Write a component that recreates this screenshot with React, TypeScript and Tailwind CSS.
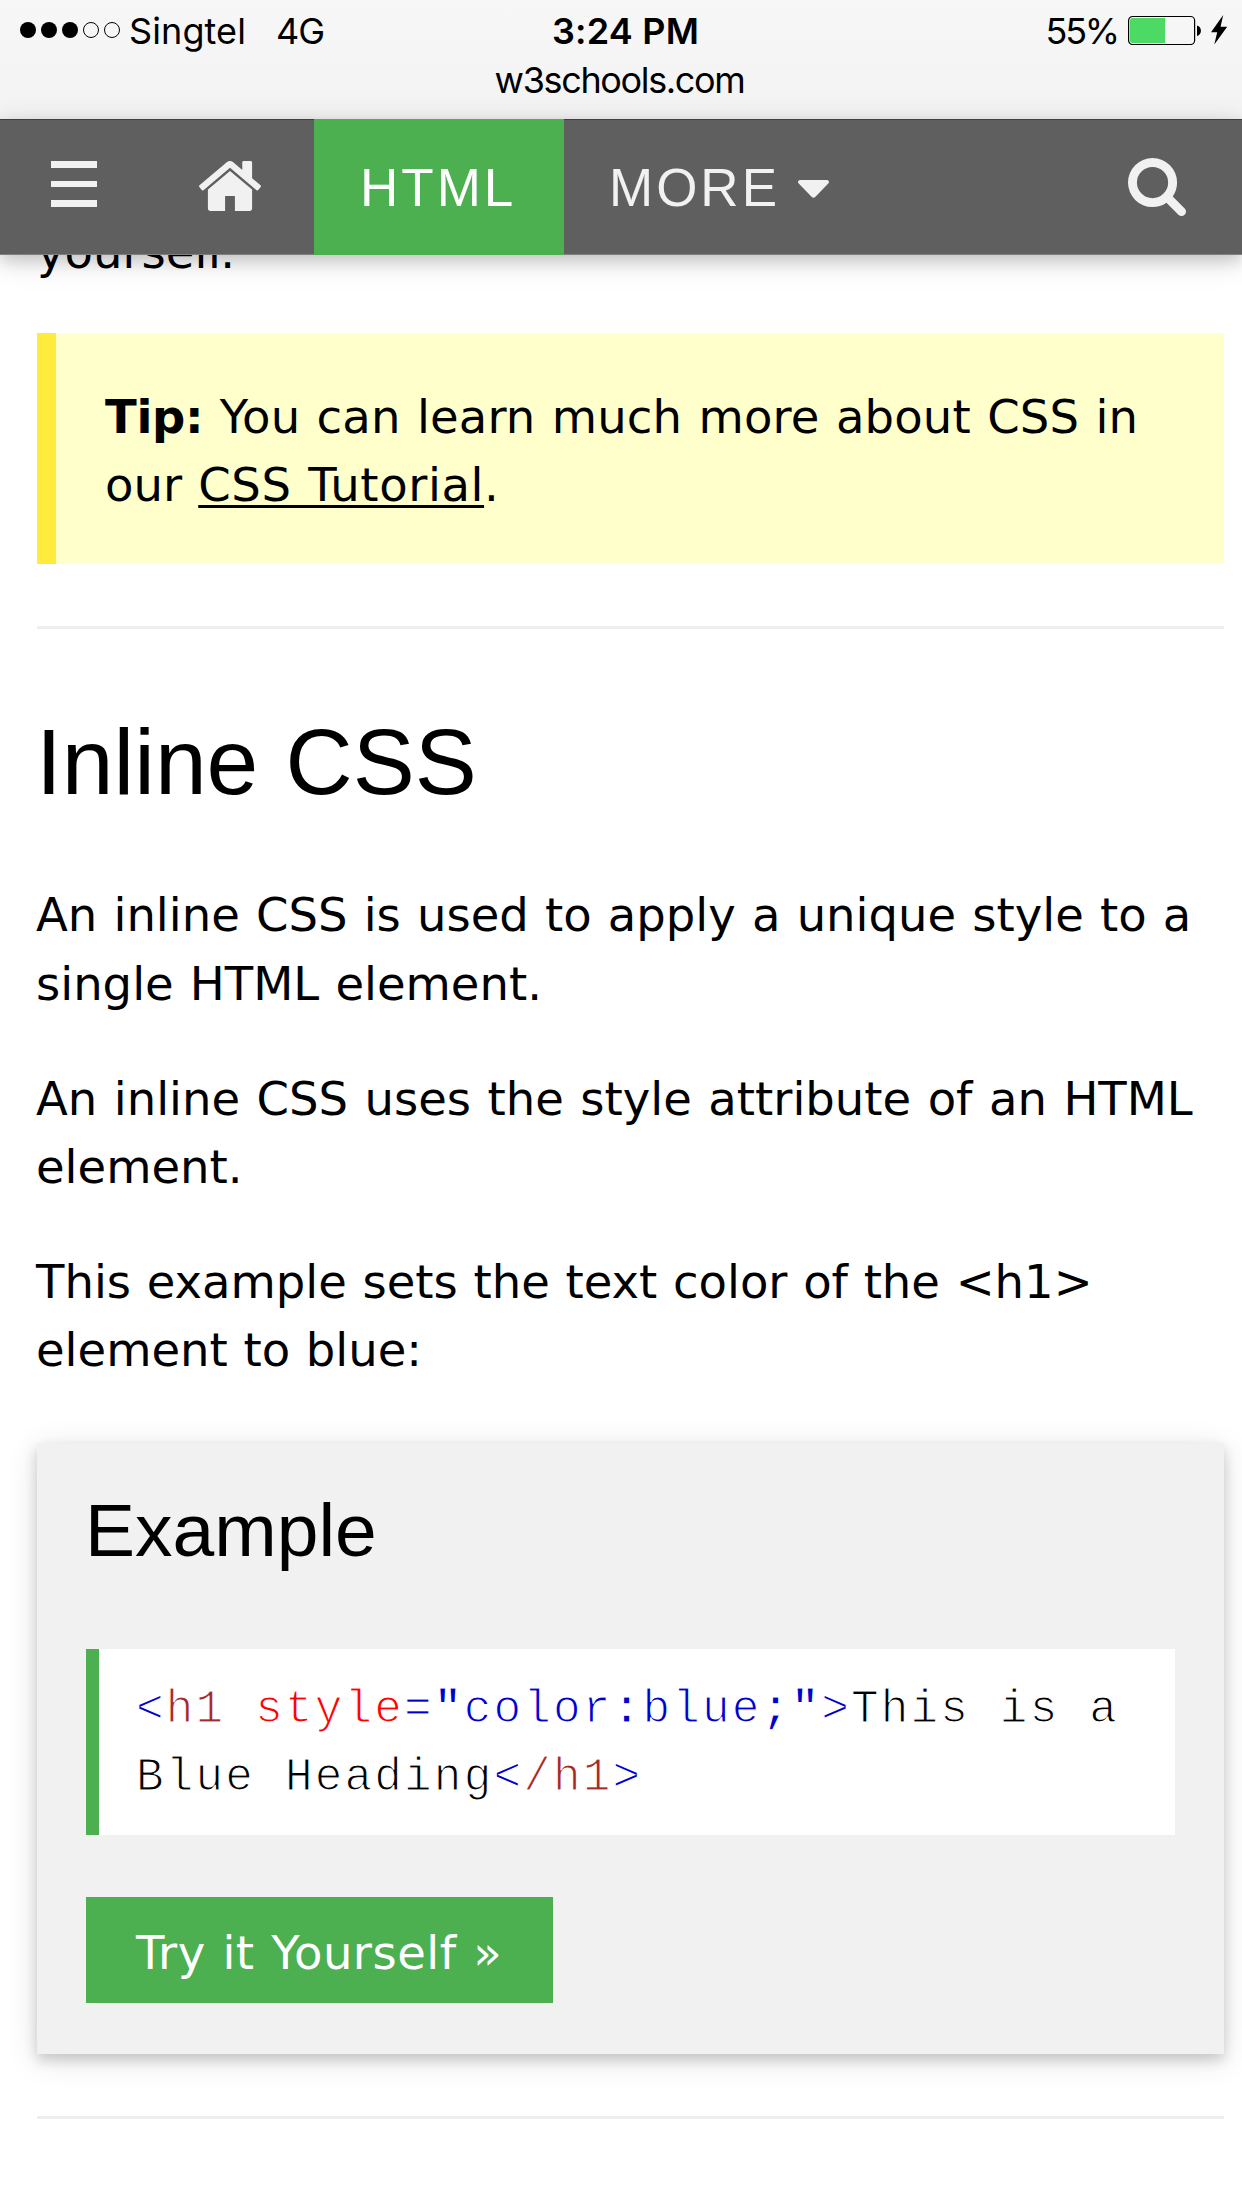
function SignalDots() {
  return (
    <div className="flex gap-[5px]">
      {[true, true, true, false, false].map((on, i) => (
        <span
          key={i}
          className={
            on
              ? "size-4 rounded-full bg-black"
              : "size-4 rounded-full border border-black"
          }
        />
      ))}
    </div>
  );
}

function Battery() {
  return (
    <svg className="h-[30px] w-[74px]" viewBox="0 0 74 30" aria-hidden="true">
      <rect x="0.6" y="1.5" width="66" height="28" rx="4" fill="none" stroke="#000" strokeWidth="1.2" />
      <path d="M4.5 3H37v25H4.500a2.500 2.500 0 0 1-2.500-2.500v-20A2.500 2.500 0 0 1 4.500 3z" fill="#4cd964" />
      <path d="M69 10.500c5.200 1 5.200 9.500 0 10.500z" fill="#000" />
    </svg>
  );
}

function Bolt() {
  return (
    <svg className="h-[30px] w-[17px]" viewBox="0 0 17 30" aria-hidden="true">
      <path d="M12.200 0 0 17.300h6.200L3.300 29.500 16.200 11.800H9.600z" fill="#000" />
    </svg>
  );
}

function StatusBar() {
  return (
    <div className="h-[119px] bg-linear-to-b from-[#f7f7f7] to-[#f3f3f3] pt-[9px] font-[Inter,sans-serif] text-[36px] leading-[44px] text-black">
      <div className="grid h-11 grid-cols-[1fr_auto_1fr]">
        <div className="flex pl-5">
          <div className="pt-[13px]">
            <SignalDots />
          </div>
          <span className="ml-[9px] tracking-[0.1px]">Singtel</span>
          <span className="ml-[30px] tracking-[-1px]">4G</span>
        </div>
        <span className="pl-[9px] font-semibold tracking-[0.2px]">3:24 PM</span>
        <div className="flex justify-end pr-[14px]">
          <span className="mr-2.5 tracking-[-2.200px]">55%</span>
          <div className="flex gap-[9px] pt-[6px]">
            <Battery />
            <Bolt />
          </div>
        </div>
      </div>
      <div className="mt-[5px] pr-[3px] text-center tracking-[-1.350px]">w3schools.com</div>
    </div>
  );
}

function NavBar() {
  return (
    <nav className="flex h-[136px] border-t border-b border-t-[#3f3f3f] border-b-[#808080] bg-[#5f5f5f] font-['Liberation_Sans',sans-serif] text-[53px] leading-[60px] tracking-[3px] text-[#f1f1f1] shadow-[0_6px_15px_rgba(0,0,0,0.160),0_6px_30px_rgba(0,0,0,0.120)]">
      <div className="w-[148px] pt-[41px] pl-[51px]">
        <div className="flex flex-col gap-[13px]">
          <span className="h-[6.500px] w-[46px] bg-[#f1f1f1]" />
          <span className="h-[6.500px] w-[46px] bg-[#f1f1f1]" />
          <span className="h-[6.500px] w-[46px] bg-[#f1f1f1]" />
        </div>
      </div>
      <div className="w-[166px] pt-[41px] pl-[51px]">
        <svg className="h-[50px] w-[62px]" viewBox="24 253 1616 1283" preserveAspectRatio="none" fill="currentColor" aria-hidden="true">
          <path d="M1408 992v480q0 26-19 45t-45 19h-384v-384h-256v384h-384q-26 0-45-19t-19-45v-480q0-1 .5-3t.5-3l575-474 575 474q1 2 1 6zm223-69l-62 74q-8 9-21 11h-3q-13 0-21-7l-692-577-692 577q-12 8-24 7-13-2-21-11l-62-74q-8-10-7-23.500t11-21.500l719-599q32-26 76-26t76 26l244 204v-195q0-14 9-23t23-9h192q14 0 23 9t9 23v408l219 182q10 8 11 21.500t-7 23.500z" />
        </svg>
      </div>
      <div className="-my-px w-[250px] bg-[#4caf50] pt-[39px] pl-[46px] text-white">HTML</div>
      <div className="flex flex-1 pt-[38px] pl-[45px]">
        <span>MORE</span>
        <svg className="mt-[22px] ml-[18px] h-[18px] w-[31px]" viewBox="0 0 31 18" fill="currentColor" aria-hidden="true">
          <path d="M2.200 0h26.600c2 0 2.900 2.100 1.500 3.600L17.200 17c-1 1-2.400 1-3.400 0L.7 3.600C-.7 2.100.2 0 2.200 0z" />
        </svg>
      </div>
      <div className="w-[114px] pt-[38px]">
        <svg className="h-[58px] w-[58px]" viewBox="0 128 1664 1664" fill="currentColor" aria-hidden="true">
          <path d="M1152 832q0-185-131.500-316.500t-316.500-131.500-316.500 131.500-131.500 316.500 131.500 316.500 316.500 131.500 316.500-131.500 131.500-316.500zm512 832q0 52-38 90t-90 38q-54 0-90-38l-343-342q-179 124-399 124-143 0-273.500-55.500t-225-150-150-225-55.500-273.500 55.500-273.500 150-225 225-150 273.500-55.500 273.500 55.500 225 150 150 225 55.500 273.500q0 220-124 399l343 343q37 37 37 90z" />
        </svg>
      </div>
    </nav>
  );
}

function ExampleCard() {
  return (
    <section className="mt-[58px] h-[611px] bg-[#f1f1f1] px-[49px] pt-[31px] shadow-[0_6px_12px_rgba(0,0,0,0.160),0_6px_30px_rgba(0,0,0,0.120)]">
      <h3 className="-ml-px font-['Liberation_Sans',sans-serif] text-[75px] leading-[112px]">Example</h3>
      <div className="mt-[63px] h-[186px] border-l-[13px] border-[#4caf50] bg-white pt-[27px] pl-[37px] font-['Liberation_Mono',monospace] text-[46px] leading-[68px] tracking-[2.180px] whitespace-nowrap [word-spacing:0px] [-webkit-text-stroke:1.200px_white]">
        <div>
          <span className="text-[#0000cd]">&lt;</span>
          <span className="text-[brown]">h1</span>
          <span className="text-[red]"> style</span>
          <span className="text-[#0000cd]">
            =<b>"</b>color<b>:</b>blue<b>;"</b>&gt;
          </span>
          <span>This is a</span>
        </div>
        <div>
          <span>Blue Heading</span>
          <span className="text-[#0000cd]">&lt;</span>
          <span className="text-[brown]">/h1</span>
          <span className="text-[#0000cd]">&gt;</span>
        </div>
      </div>
      <div className="mt-[62px] h-[106px] w-[467px] bg-[#4caf50] pt-[22px] pl-[50px] tracking-[0.500px] text-white">
        Try it Yourself »
      </div>
    </section>
  );
}

export default function App() {
  return (
    <div className="h-[2208px] w-[1242px] overflow-hidden bg-white text-black">
      <header className="relative z-10">
        <StatusBar />
        <NavBar />
      </header>
      <main className="-mt-[37px] pr-[18px] pl-[37px] font-['DejaVu_Sans',sans-serif] text-[46.500px] leading-[68.500px] whitespace-nowrap [word-spacing:1.400px]">
        <p className="h-[68px]">yourself.</p>
        <div className="mt-[47px] h-[231px] border-l-[19px] border-[#ffeb3b] bg-[#ffffcc] pt-[50px] pl-[49px]">
          <p className="leading-[68px]">
            <b className="tracking-[-0.300px]">Tip:</b>
            <span className="tracking-[0.150px]"> You can learn much more about CSS in</span>
            <br />
            our{" "}
            <span className="tracking-[0.600px] underline decoration-[3px] underline-offset-[4px]">CSS Tutorial</span>.
          </p>
        </div>
        <hr className="mt-[62px] h-[3px] border-0 bg-[#eeeeee]" />
        <h2 className="mt-[63px] -ml-px font-['Liberation_Sans',sans-serif] text-[93px] leading-[140px]">Inline CSS</h2>
        <div className="mt-[49px] -ml-px flex flex-col gap-[46.500px]">
          <p>
            An inline CSS is used to apply a unique style to a
            <br />
            single HTML element.
          </p>
          <p className="[word-spacing:1.700px]">
            An inline CSS uses the style attribute of an HTML
            <br />
            element.
          </p>
          <p className="h-[137px] leading-[68px] [word-spacing:0.900px]">
            This example sets the text color of the &lt;h1&gt;
            <br />
            element to blue:
          </p>
        </div>
        <ExampleCard />
        <hr className="mt-[62px] h-[3px] border-0 bg-[#eeeeee]" />
      </main>
    </div>
  );
}
